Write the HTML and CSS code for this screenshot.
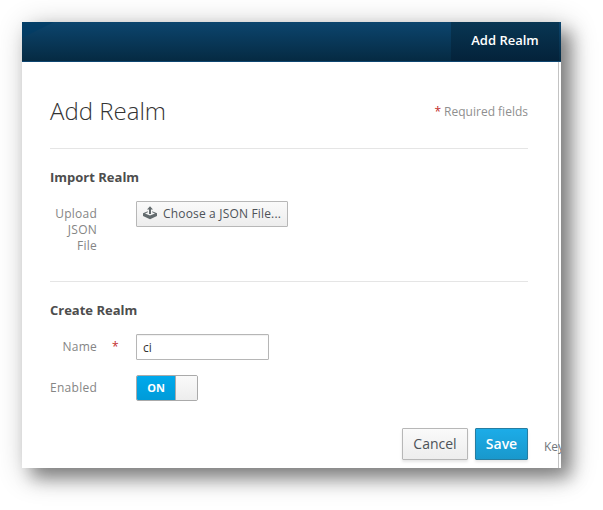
FILE: index.html
```html
<!DOCTYPE html>
<html lang="en">
<head>
<meta charset="utf-8">
<title>Add Realm</title>
<link rel="stylesheet" href="styles.css">
</head>
<body>
<div class="window">
  <header class="navbar"><svg class="shine" width="33" height="17"><path d="M0 0H32L0 16Z"/></svg><a class="tab">Add Realm</a></header>
  <div class="body">
    <main class="content">
      <div class="title-row">
        <h1>Add Realm</h1>
        <p class="required"><span class="star">*</span> Required fields</p>
      </div>
      <form>
        <section class="import">
          <h2>Import Realm</h2>
          <div class="row">
            <label class="upload-label">Upload JSON File</label>
            <button type="button" class="btn file">
              <svg class="icon" width="16" height="14" viewBox="0 0 16 14"><path fill="#636b6e" d="M8 .3 11 3.6H9V8H7V3.6H5ZM5.8 5.2V6.3L3 7.4 8 9.6 13 7.4 10.2 6.3V5.2L15 7.2V10L8 13.3 1 10V7.2Z"/></svg>
              <span>Choose a JSON File...</span>
            </button>
          </div>
        </section>
        <section class="create">
          <h2>Create Realm</h2>
          <div class="row name-row">
            <label>Name</label><span class="star mark">*</span>
            <input type="text" value="ci">
          </div>
          <div class="row enabled-row">
            <label>Enabled</label>
            <div class="switch"><span class="on">ON</span><span class="handle"></span></div>
          </div>
        </section>
        <div class="actions">
          <button type="button" class="btn large">Cancel</button>
          <button type="button" class="btn large primary">Save</button>
        </div>
      </form>
    </main>
    <aside class="side">Key</aside>
  </div>
</div>
</body>
</html>
```
FILE: styles.css
```css
* { box-sizing: border-box; }
body {
  margin: 0;
  padding: 22px;
  height: 510px;
  overflow: hidden;
  background: #fff;
  color: #4d5258;
  font: 12px/16px "Open Sans", sans-serif;
}
.window {
  width: 539px;
  height: 446px;
  background: #fff;
  box-shadow: 10px 10px 16px rgba(0, 0, 0, .36), 6px 6px 28px rgba(0, 0, 0, .3);
}
.navbar {
  display: flex;
  justify-content: space-between;
  height: 40px;
  padding-right: 2px;
  border-bottom: 1px solid #0e4570;
  background: linear-gradient(#0c456e, #052a42);
}
.shine { fill: #003c66; opacity: .6; }
.tab {
  width: 108px;
  background: linear-gradient(#083653, #04223a);
  color: #fff;
  font-size: 13px;
  font-weight: 600;
  line-height: 37px;
  text-align: center;
}
.body { display: flex; height: 406px; overflow: hidden; }
.content {
  flex: 0 0 537px;
  padding: 32px 30px 0 28px;
  border-right: 1px solid #c3c3c3;
}
.title-row {
  display: flex;
  justify-content: space-between;
  height: 55px;
  border-bottom: 1px solid #e5e5e5;
}
h1 {
  margin: 0;
  color: #333;
  font-size: 24px;
  font-weight: 300;
  line-height: 33px;
}
.required { margin: 10px 0 0; color: #8f8f8f; }
.star { color: #c22b2b; }
h2 {
  margin: 0;
  color: #4d4d4d;
  font-size: 13px;
  font-weight: 700;
  line-height: 18px;
}
.import { height: 133px; padding-top: 19px; border-bottom: 1px solid #e5e5e5; }
.row { display: flex; }
.row label { width: 47px; color: #858585; letter-spacing: .25px; text-align: right; white-space: nowrap; }
.import .row { margin-top: 15px; }
.import .row label { padding-top: 5px; white-space: normal; }
.btn {
  display: flex;
  align-items: center;
  padding: 0;
  border: 1px solid #b7b7b7;
  border-radius: 1px;
  background: linear-gradient(#fafafa, #ededed);
  color: #4d5258;
  font: 12px/16px "Open Sans", sans-serif;
}
.file { width: 152px; height: 26px; margin-left: 39px; padding-left: 5px; letter-spacing: .17px; white-space: nowrap; }
.icon { margin: -2px 5px 0 0; }
.create { height: 146px; padding-top: 19px; }
.name-row { margin-top: 15px; align-items: center; }
.mark { width: 39px; padding-left: 15px; }
input {
  width: 133px;
  height: 26px;
  padding: 0 6px;
  border: 1px solid #b6b6b6;
  border-radius: 1px;
  box-shadow: inset 0 1px 1px rgba(0, 0, 0, .06);
  color: #333;
  font: 12px "Open Sans", sans-serif;
}
.enabled-row { margin-top: 15px; align-items: center; }
.switch {
  display: flex;
  width: 62px;
  height: 26px;
  margin-left: 39px;
  border: 1px solid #aaa;
  border-radius: 2px;
  overflow: hidden;
}
.on {
  width: 38px;
  background: linear-gradient(#00a9ec, #009bd8);
  color: #fff;
  font-size: 11px;
  font-weight: 700;
  line-height: 24px;
  text-align: center;
}
.handle { flex: 1; border-left: 1px solid #aaa; background: linear-gradient(#fafafa, #ededed); }
.actions { display: flex; justify-content: flex-end; gap: 7px; }
.large {
  justify-content: center;
  width: 66px;
  height: 32px;
  box-shadow: 0 2px 3px rgba(0, 0, 0, .1);
  font-size: 14px;
}
.primary {
  width: 53px;
  border-color: #267da1;
  background: linear-gradient(#1cace8, #1998cc);
  color: #fff;
  font-weight: 600;
}
.side { width: 2px; margin-left: -15px; padding-top: 377px; color: #72767b; white-space: nowrap; }
```
